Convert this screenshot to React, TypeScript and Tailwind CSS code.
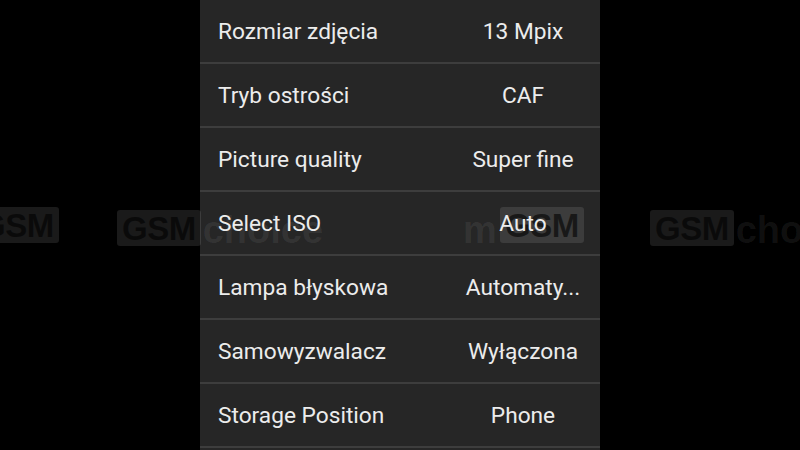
import React from "react";

const rows: [string, string][] = [
  ["Rozmiar zdjęcia", "13 Mpix"],
  ["Tryb ostrości", "CAF"],
  ["Picture quality", "Super fine"],
  ["Select ISO", "Auto"],
  ["Lampa błyskowa", "Automaty..."],
  ["Samowyzwalacz", "Wyłączona"],
  ["Storage Position", "Phone"],
];

function Mark({ left, text, after }: { left: number; text: string; after?: string }) {
  return (
    <div className="absolute top-[207px] flex items-center" style={{ left }}>
      <div className="h-[36px] px-[5px] rounded-[3px] bg-[rgba(255,255,255,0.1)] flex items-center text-[33px] font-bold leading-none text-[rgba(0,0,0,0.6)] tracking-[-0.5px]">
        {text}
      </div>
      {after && (
        <span className="text-[38px] font-bold leading-none text-[rgba(255,255,255,0.07)] mt-[4px] ml-[2px]">
          {after}
        </span>
      )}
    </div>
  );
}

export default function App() {
  return (
    <div className="relative w-[800px] h-[450px] bg-black overflow-hidden">
      <div className="mx-auto w-[400px] h-[450px] bg-[#262626] flex flex-col font-['Roboto',sans-serif] text-[22.7px] text-[#ececec]">
        {rows.map(([label, value]) => (
          <div key={label} className="h-[64px] shrink-0 flex items-center border-b-2 border-[#3d3d3d]">
            <div className="relative z-10 flex-1 pl-[18px] pt-[2px]">{label}</div>
            <div className="relative z-10 w-[154px] text-center pt-[2px]">{value}</div>
          </div>
        ))}
      </div>
      <div className="pointer-events-none absolute inset-0 z-[5] font-['Liberation_Sans',Arial,sans-serif]">
        <Mark left={-25} text="GSM" />
        <Mark left={117} text="GSM" after="choice" />
        <span className="absolute left-[463px] top-[211px] text-[38px] font-bold leading-none text-[rgba(255,255,255,0.07)]">m</span>
        <Mark left={500} text="GSM" />
        <Mark left={650} text="GSM" after="choice" />
      </div>
    </div>
  );
}
